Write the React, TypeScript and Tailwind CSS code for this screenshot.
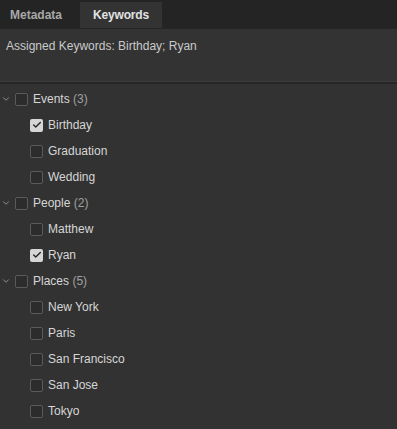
import { ChevronDown, Check } from 'lucide-react'

type Item = { label: string; checked?: boolean }
type Group = { label: string; items: Item[] }

const groups: Group[] = [
  {
    label: 'Events',
    items: [{ label: 'Birthday', checked: true }, { label: 'Graduation' }, { label: 'Wedding' }],
  },
  {
    label: 'People',
    items: [{ label: 'Matthew' }, { label: 'Ryan', checked: true }],
  },
  {
    label: 'Places',
    items: [
      { label: 'New York' },
      { label: 'Paris' },
      { label: 'San Francisco' },
      { label: 'San Jose' },
      { label: 'Tokyo' },
    ],
  },
]

function Box({ checked }: { checked?: boolean }) {
  if (checked) {
    return (
      <span className="flex h-[13px] w-[13px] items-center justify-center rounded-[2px] bg-[#d6d6d6]">
        <Check className="h-[10px] w-[10px] text-[#2a2a2a]" strokeWidth={3.5} />
      </span>
    )
  }
  return <span className="block h-[13px] w-[13px] rounded-[2px] border border-[#5a5a5a] bg-[#2c2c2c]" />
}

export default function App() {
  return (
    <div className="h-[429px] w-[397px] overflow-hidden bg-[#323232] font-['Liberation_Sans',sans-serif]">
      {/* tabs */}
      <div className="flex h-[29px] border-b border-[#262626] bg-[#242424] pt-[2px]">
        <div className="flex w-[80px] items-center pl-[10px] text-[12px] font-bold text-[#a8a8a8]">
          Metadata
        </div>
        <div className="flex w-[82px] items-center justify-center bg-[#333333] text-[12px] font-bold tracking-[-0.2px] text-[#e2e2e2]">
          Keywords
        </div>
      </div>

      {/* assigned */}
      <div className="h-[53px] border-b border-[#3c3c3c] bg-[#333333] px-[6px] pt-[8px] text-[12px] text-[#cacaca]">
        Assigned Keywords: Birthday; Ryan
      </div>
      <div className="h-[2px] bg-[#262626]" />

      {/* keyword tree */}
      <div className="pt-[2px]">
        {groups.map((g) => (
          <div key={g.label}>
            <div className="flex h-[26px] items-center text-[12px] text-[#d6d6d6]">
              <ChevronDown className="ml-[1px] h-[10px] w-[10px] text-[#a0a0a0]" strokeWidth={2} />
              <span className="ml-[4px]">
                <Box />
              </span>
              <span className="ml-[5px]">
                {g.label} <span className="text-[#a0a0a0]">({g.items.length})</span>
              </span>
            </div>
            {g.items.map((it) => (
              <div key={it.label} className="flex h-[26px] items-center pl-[30px] text-[12px] text-[#d6d6d6]">
                <Box checked={it.checked} />
                <span className="ml-[5px]">{it.label}</span>
              </div>
            ))}
          </div>
        ))}
      </div>
    </div>
  )
}
